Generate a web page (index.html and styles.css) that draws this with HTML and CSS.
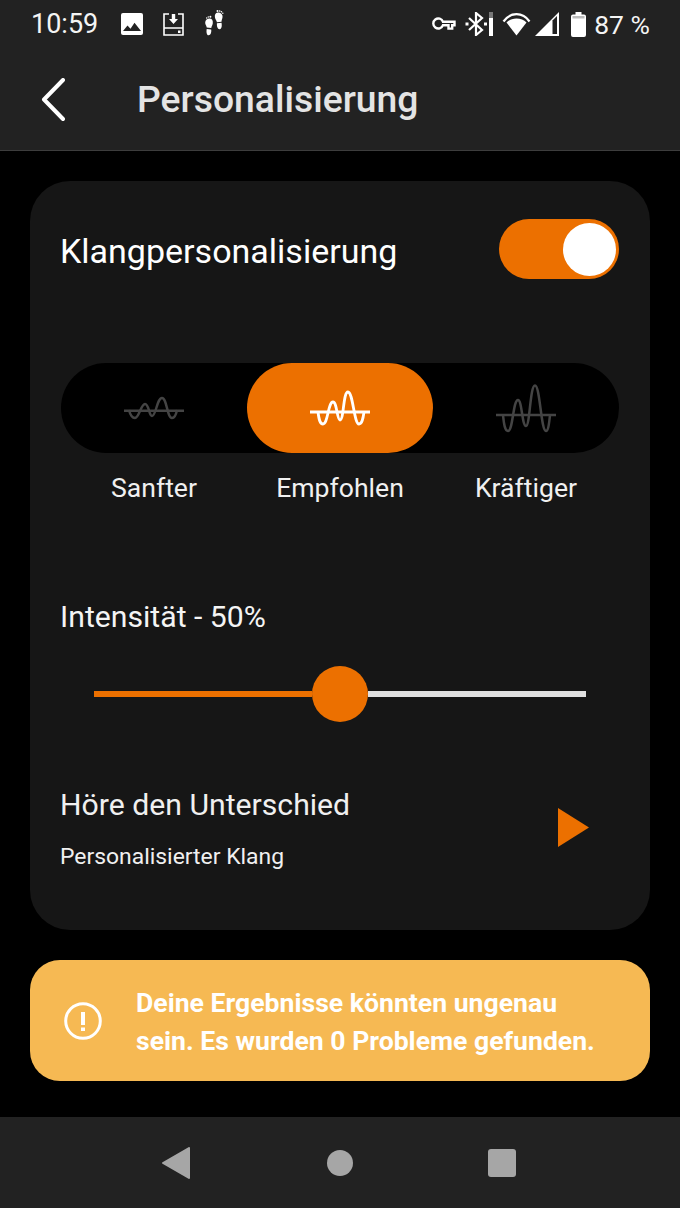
FILE: index.html
```html
<!DOCTYPE html>
<html>
  <head>
    <meta charset="UTF-8" />
    <title>Personalisierung</title>
    <link rel="stylesheet" href="styles.css">
  </head>
  <body>
    <div class="screen">
      <div class="statusbar">
        <div class="status-left">
          <span class="clock">10:59</span>
          <svg class="icon-image" width="22" height="22" viewBox="0 0 22 22"><path fill-rule="evenodd" fill="#fff" d="M2 0h18a2 2 0 0 1 2 2v18a2 2 0 0 1-2 2H2a2 2 0 0 1-2-2V2a2 2 0 0 1 2-2z"/><path fill="#222" d="M2 18l4.500-5.500 3 3.200 4-6L20 18z"/></svg>
          <svg class="icon-save" width="21" height="23" viewBox="0 0 21 23"><path fill="none" stroke="#fff" stroke-width="1.600" d="M6 1H1v21h19V1h-5M1 15h19"/><path fill="#fff" d="M8.800 1h3.400v5H15l-4.500 5L6 6h2.800zM15 17.500h2.500V20H15z"/></svg>
          <svg class="icon-steps" width="20" height="26" viewBox="0 0 20 26"><g fill="#fff"><path d="M5.500 8.500c2.500 0 3.600 2 3.300 4.700-.2 1.800-1.300 3-1.500 4.800l-4.600-.6C2.500 15.500 1 14.500 1.200 12.300 1.400 10 3.300 8.500 5.500 8.500z"/><path d="M2.700 18.900l4.500.6c.4 3-.5 5.700-2.600 5.700-2 0-2.400-3.300-1.900-6.300z"/><path d="M13.800 2.500c2.200-.3 4.300 1 4.700 3.300.4 2.300-.9 3.600-1 6l-4.600.5c-.3-1.800-1.500-2.800-1.900-4.600-.6-2.700.3-4.900 2.800-5.200z"/><path d="M12.900 13.300l4.600-.5c.6 3 .3 6.100-1.700 6.400-2.200.3-3.100-2.800-2.900-5.900z"/><circle cx="13.500" cy="1.100" r="1"/><circle cx="15.700" cy="1" r=".8"/><circle cx="17.400" cy="1.800" r=".8"/><circle cx="18.800" cy="3.200" r=".7"/><circle cx="6.400" cy="6.800" r="1"/><circle cx="4.300" cy="7" r=".7"/><circle cx="2.700" cy="8" r=".7"/></g></svg>
        </div>
        <div class="status-right">
          <svg class="icon-key" width="25" height="14" viewBox="0 0 25 14"><path fill="none" stroke="#fff" stroke-width="2.400" d="M12 4.800h11.500v3.400h-2.300v3.400h-3.700V8.200H12a5 5 0 1 1 0-3.400z"/></svg>
          <svg class="icon-bt" width="28" height="24" viewBox="0 0 28 24"><path fill="none" stroke="#fff" stroke-width="2.200" d="M4 6l13 12-6 5V1l6 5L4 18"/><rect x="0.500" y="10.500" width="3" height="3" fill="#fff"/><rect x="19" y="10.500" width="3" height="3" fill="#fff"/><rect x="24" y="0" width="4" height="6" fill="#777"/><rect x="24" y="6" width="4" height="18" fill="#fff"/></svg>
          <svg class="icon-wifi" width="29" height="23" viewBox="0 0 29 23"><path fill="none" stroke="#fff" stroke-width="2.200" d="M1.500 8.500C5 3.500 9.500 1.200 14.500 1.200s9.500 2.300 13 7.300"/><path fill="#fff" d="M4.500 9.500C7 7 10.500 5.500 14.500 5.500s7.500 1.500 10 4L14.500 22.500z"/></svg>
          <svg class="icon-signal" width="24" height="24" viewBox="0 0 24 24"><path fill="#fff" d="M0 24L24 0v24z"/><path fill="#222" d="M17.500 8.500l4.500-4.400V22h-4.500z"/></svg>
          <svg class="icon-battery" width="15" height="25" viewBox="0 0 15 25"><path fill="#fff" d="M4.500 0h6v2.500h2.500a2 2 0 0 1 2 2V23a2 2 0 0 1-2 2H2a2 2 0 0 1-2-2V4.500a2 2 0 0 1 2-2h2.500z"/><rect x="1.500" y="4" width="12" height="2.500" fill="#bbb"/></svg>
          <span class="battery-text">87 %</span>
        </div>
      </div>

      <div class="appbar">
        <svg class="back" width="24" height="44" viewBox="0 0 24 44"><path fill="none" stroke="#fff" stroke-width="4" stroke-linecap="round" stroke-linejoin="round" d="M22 2L3 21.500 22 41"/></svg>
        <h1>Personalisierung</h1>
      </div>

      <div class="content">
        <div class="card">
          <div class="row-toggle">
            <span class="card-title">Klangpersonalisierung</span>
            <div class="toggle"><div class="toggle-knob"></div></div>
          </div>

          <div class="segments">
            <div class="segment">
              <svg class="wave-soft" width="62" height="30" viewBox="0 0 62 30"><path class="axis" d="M1 17.700h60"/><path class="wave" d="M6 17C7.500 23 9.500 25 12 25 16 25 18 11 22 11 26 11 26 23 29 23 33 23 34 5 39 5 44 5 44 25 49 25 51.500 25 53 22 54 17"/></svg>
            </div>
            <div class="segment active">
              <svg class="wave-mid" width="62" height="40" viewBox="0 0 62 40"><path class="axis" d="M1 24h60"/><path class="wave" d="M9 24C10 32 11 36 14 36 19 36 19 14 24 14 28 14 28 32 31 32 35 32 34 4 39 4 44 4 45 36 50 36 53 36 54 31 55 24"/></svg>
            </div>
            <div class="segment">
              <svg class="wave-strong" width="62" height="50" viewBox="0 0 62 50"><path class="axis" d="M1 32h60"/><path class="wave" d="M8 32C9 42 10 48 13 48 18 48 18 17 23 17 27 17 27 43 31 43 35 43 35 2.500 40 2.500 45 2.500 46 48 51 48 53 48 54 42 55 32"/></svg>
            </div>
          </div>
          <div class="segment-labels">
            <span>Sanfter</span>
            <span>Empfohlen</span>
            <span>Kräftiger</span>
          </div>

          <div class="section-label">Intensität - 50%</div>
          <div class="slider">
            <div class="slider-fill"></div>
            <div class="slider-thumb"></div>
            <div class="slider-rest"></div>
          </div>

          <div class="preview">
            <div>
              <div class="preview-title">Höre den Unterschied</div>
              <div class="preview-sub">Personalisierter Klang</div>
            </div>
            <svg class="play" width="31" height="39" viewBox="0 0 31 39"><path fill="#ec7000" d="M0 0l31 19.500L0 39z"/></svg>
          </div>
        </div>

        <div class="banner">
          <svg class="banner-icon" width="38" height="38" viewBox="0 0 38 38"><circle cx="19" cy="19" r="17.300" fill="none" stroke="#fff" stroke-width="3"/><path fill="#fff" d="M17 10h4v13h-4zM17 25.500h4v3.500h-4z"/></svg>
          <div class="banner-text">Deine Ergebnisse könnten ungenau sein. Es wurden 0 Probleme gefunden.</div>
        </div>
      </div>

      <div class="navbar">
        <svg width="28" height="32" viewBox="0 0 28 32"><path fill="#a6a6a6" stroke="#a6a6a6" stroke-width="2" stroke-linejoin="round" d="M27 1v30L1 16z"/></svg>
        <svg class="nav-home" width="26" height="26" viewBox="0 0 26 26"><circle cx="13" cy="13" r="13" fill="#a6a6a6"/></svg>
        <svg width="28" height="28" viewBox="0 0 28 28"><rect width="28" height="28" rx="3" fill="#a6a6a6"/></svg>
      </div>
    </div>
  </body>
</html>
```

FILE: styles.css
```css
* {
  box-sizing: border-box;
}
body {
  font-family: Roboto, "Liberation Sans", sans-serif;
  margin: 0;
  padding: 0;
  background-color: #000;
  color: #fff;
}
.screen {
  display: flex;
  flex-direction: column;
  width: 680px;
  height: 1208px;
  overflow: hidden;
}
.statusbar {
  display: flex;
  justify-content: space-between;
  align-items: center;
  height: 50px;
  padding: 0 30px 2px 31px;
  background-color: #222;
}
.status-left,
.status-right {
  display: flex;
  align-items: center;
}
.clock {
  font-size: 27px;
  margin-right: 23px;
  color: #f4f4f4;
}
.icon-save {
  margin-left: 20px;
}
.icon-steps {
  margin-left: 20px;
  margin-bottom: 2px;
}
.icon-bt {
  margin-left: 9px;
}
.icon-wifi {
  margin-left: 9px;
}
.icon-signal {
  margin-left: 4px;
}
.icon-battery {
  margin-left: 12px;
}
.battery-text {
  font-size: 26.500px;
  margin-left: 8px;
  color: #f4f4f4;
}
.appbar {
  display: flex;
  align-items: center;
  height: 101px;
  padding-left: 41px;
  background-color: #222;
  border-bottom: 1px solid #3d3d3d;
}
.appbar h1 {
  margin: 0 0 2px 72px;
  font-size: 37.300px;
  font-weight: 500;
  color: #e4e4e4;
}
.content {
  flex: 1;
  padding: 30px 30px 0;
}
.card {
  height: 749px;
  padding: 38px 31px 0;
  background-color: #161616;
  border-radius: 40px;
}
.row-toggle {
  display: flex;
  justify-content: space-between;
  align-items: center;
  height: 60px;
}
.card-title {
  margin-left: -1px;
  padding-top: 4px;
  font-size: 34px;
}
.toggle {
  display: flex;
  justify-content: flex-end;
  align-items: center;
  width: 120px;
  height: 60px;
  padding-right: 3px;
  background-color: #ec7000;
  border-radius: 30px;
}
.toggle-knob {
  width: 53px;
  height: 53px;
  background-color: #fff;
  border-radius: 50%;
}
.segments {
  display: grid;
  grid-template-columns: 186px 186px 186px;
  height: 90px;
  margin-top: 84px;
  background-color: #000;
  border-radius: 45px;
}
.segment {
  display: flex;
  justify-content: center;
  align-items: center;
  border-radius: 45px;
}
.segment.active {
  background-color: #ec7000;
}
.axis,
.wave {
  fill: none;
  stroke: #444;
  stroke-width: 2.500;
}
.active .axis,
.active .wave {
  stroke: #fff;
  stroke-width: 2.800;
}
.segment-labels {
  display: grid;
  grid-template-columns: 186px 186px 186px;
  margin-top: 20px;
  font-size: 26.600px;
  line-height: 30px;
  text-align: center;
  color: #f0f0f0;
}
.section-label {
  margin: 97px 0 0 -1px;
  font-size: 30.200px;
  line-height: 34px;
  color: #f4f4f4;
}
.slider {
  display: flex;
  align-items: center;
  height: 56px;
  margin: 32px 33px 0;
}
.slider-fill {
  flex: 1;
  height: 6px;
  background-color: #ec7000;
}
.slider-thumb {
  width: 56px;
  height: 56px;
  background-color: #ec7000;
  border-radius: 50%;
}
.slider-rest {
  flex: 1;
  height: 6px;
  background-color: #e0e0e0;
}
.preview {
  display: flex;
  justify-content: space-between;
  align-items: center;
  margin: 66px 0 0 -1px;
  padding-right: 30px;
}
.preview-title {
  font-size: 30.200px;
  line-height: 34px;
  color: #f0f0f0;
}
.preview-sub {
  margin-top: 22px;
  font-size: 22.900px;
  line-height: 26px;
  color: #f0f0f0;
}
.play {
  margin-top: -4px;
}
.banner {
  display: flex;
  align-items: center;
  height: 121px;
  margin-top: 30px;
  padding: 0 34px;
  background-color: #f6b953;
  border-radius: 30px;
}
.banner-icon {
  flex-shrink: 0;
}
.banner-text {
  margin-left: 34px;
  padding-top: 2px;
  font-size: 26.600px;
  font-weight: 700;
  line-height: 38px;
  color: #fff;
}
.navbar {
  display: flex;
  justify-content: space-between;
  align-items: center;
  height: 91px;
  padding: 0 164px 0 162px;
  background-color: #222;
}
.nav-home {
  margin-left: 2px;
}
```
